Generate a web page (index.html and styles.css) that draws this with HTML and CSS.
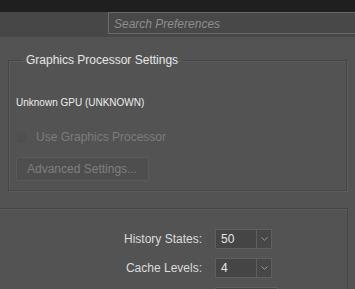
FILE: index.html
```html
<!DOCTYPE html>
<html>
<head>
<meta charset="utf-8">
<link rel="stylesheet" href="styles.css">
</head>
<body>
<div class="titlebar"></div>
<div class="searchbar">
  <div class="search">Search Preferences</div>
</div>
<div class="content">
  <fieldset class="group">
    <legend class="legend">Graphics Processor Settings</legend>
    <div class="gpu">Unknown GPU (UNKNOWN)</div>
    <div class="check-row">
      <span class="checkbox"></span>
      <span class="check-label">Use Graphics Processor</span>
    </div>
    <div class="button">Advanced Settings...</div>
  </fieldset>
  <div class="panel">
    <div class="row">
      <span class="label">History States:</span>
      <div class="select"><span class="value">50</span><span class="arrow"><svg width="7" height="4" viewBox="0 0 7 4"><path d="M0.5 0.5 L3.5 3.3 L6.5 0.5" fill="none" stroke="#9a9a9a" stroke-width="1"/></svg></span></div>
    </div>
    <div class="row">
      <span class="label">Cache Levels:</span>
      <div class="select"><span class="value">4</span><span class="arrow"><svg width="7" height="4" viewBox="0 0 7 4"><path d="M0.5 0.5 L3.5 3.3 L6.5 0.5" fill="none" stroke="#9a9a9a" stroke-width="1"/></svg></span></div>
    </div>
    <div class="row">
      <span class="label"></span>
      <div class="select wide"></div>
    </div>
  </div>
</div>
</body>
</html>
```
FILE: styles.css
```css
html, body {
  margin: 0;
  padding: 0;
}
body {
  width: 355px;
  height: 289px;
  overflow: hidden;
  background: #535353;
  font-family: "Liberation Sans", Arial, sans-serif;
  font-size: 12px;
  color: #e0e0e0;
}
.titlebar {
  height: 12px;
  background: #1f1f1f;
}
.searchbar {
  height: 25px;
  background: #474747;
  padding-left: 108px;
  box-sizing: border-box;
}
.search {
  height: 22px;
  box-sizing: border-box;
  border: 1px solid #696969;
  border-right: none;
  background: #484848;
  color: #8e8e8e;
  font-style: italic;
  font-size: 12px;
  line-height: 22px;
  padding-left: 5px;
}
.content {
  padding: 0 8px 0 8px;
}
.group {
  margin: 16px 0 0 0;
  padding: 0 0 0 7px;
  border: 1px solid #464646;
  box-shadow: inset 1px 1px 0 #5c5c5c, 1px 1px 0 #5c5c5c;
  height: 138px;
  box-sizing: border-box;
  min-width: 0;
}
.legend {
  margin-left: 6px;
  padding: 0 4px;
  color: #e6e6e6;
  font-size: 12px;
  line-height: 14px;
}
.gpu {
  margin-top: 30px;
  font-size: 10px;
  line-height: 12px;
  color: #ececec;
}
.check-row {
  display: flex;
  align-items: center;
  gap: 9px;
  margin-top: 21px;
  height: 14px;
}
.checkbox {
  width: 9px;
  height: 9px;
  border: 1px solid #525252;
  background: #4f4f4f;
}
.check-label {
  color: #7c7c7c;
}
.button {
  margin-top: 13px;
  width: 133px;
  height: 24px;
  box-sizing: border-box;
  border: 1px solid #5b5b5b;
  border-radius: 2px;
  background: #4e4e4e;
  color: #7e7e7e;
  padding-left: 10px;
  line-height: 22px;
}
.panel {
  margin: 17px -1px 0 -9px;
  border-top: 1px solid #464646;
  border-right: 1px solid #464646;
  box-shadow: 0 1px 0 #5c5c5c inset;
  padding-top: 20px;
  height: 100px;
}
.row {
  display: flex;
  align-items: center;
  height: 20px;
  margin-bottom: 9px;
}
.label {
  width: 203px;
  text-align: right;
  color: #dcdcdc;
  font-size: 12px;
}
.select {
  margin-left: 13px;
  width: 57px;
  height: 20px;
  box-sizing: border-box;
  border: 1px solid #5f5f5f;
  background: #454545;
  display: flex;
}
.select.wide {
  width: 63px;
}
.value {
  flex: 1;
  padding-left: 5px;
  line-height: 18px;
  color: #e6e6e6;
}
.arrow {
  width: 14px;
  border-left: 1px solid #5f5f5f;
  display: flex;
  align-items: center;
  justify-content: center;
  background: #474747;
}
```
